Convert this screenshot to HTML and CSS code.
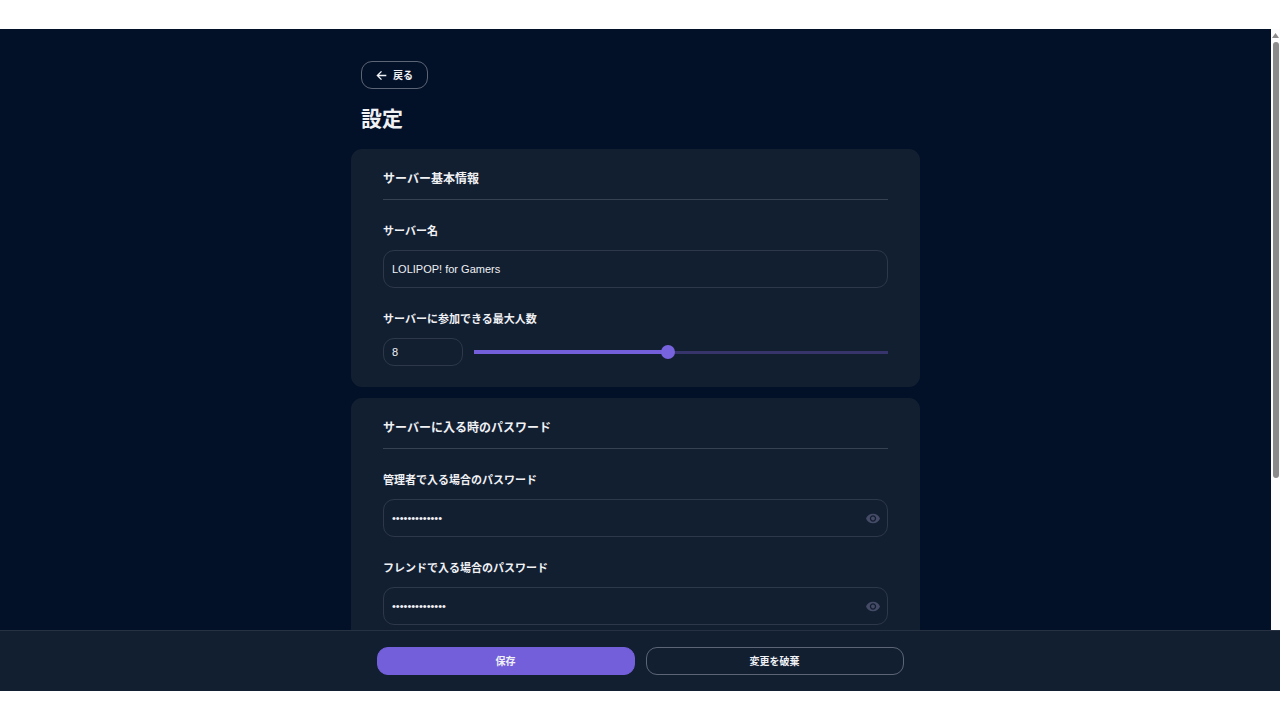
FILE: index.html
```html
<!DOCTYPE html>
<html lang="ja">
<head>
    <meta charset="UTF-8">
    <title>設定</title>
    <link rel="stylesheet" href="styles.css">
</head>
<body>

<div class="viewport">
    <main class="content">
        <div class="column">
            <header class="page-header">
                <a class="btn btn-back" href="#">
                    <svg class="icon-arrow" viewBox="0 0 16 16" aria-hidden="true"><path d="M15 8H2M8 2L2 8l6 6"/></svg>
                    戻る
                </a>
                <h1>設定</h1>
            </header>

            <form id="settings" class="cards">
                <section class="card">
                    <h2>サーバー基本情報</h2>
                    <div class="field">
                        <label for="server-name">サーバー名</label>
                        <input class="box" type="text" id="server-name" value="LOLIPOP! for Gamers">
                    </div>
                    <div class="field">
                        <label for="max-players">サーバーに参加できる最大人数</label>
                        <div class="players">
                            <input class="box box-small" type="text" inputmode="numeric" id="max-players" value="8">
                            <input class="slider" type="range" id="players-range" min="1" max="16" value="8" aria-label="サーバーに参加できる最大人数">
                        </div>
                    </div>
                </section>

                <section class="card">
                    <h2>サーバーに入る時のパスワード</h2>
                    <div class="field">
                        <label for="admin-pass">管理者で入る場合のパスワード</label>
                        <div class="box password">
                            <input type="password" id="admin-pass" value="administrator">
                            <button type="button" class="eye" aria-label="パスワードを表示">
                                <svg viewBox="1 4 22 16" aria-hidden="true"><path d="M12 4.5C7 4.5 2.73 7.61 1 12c1.73 4.39 6 7.5 11 7.5s9.27-3.11 11-7.5c-1.73-4.39-6-7.5-11-7.5zM12 17c-2.76 0-5-2.24-5-5s2.24-5 5-5 5 2.24 5 5-2.24 5-5 5zm0-8c-1.66 0-3 1.34-3 3s1.34 3 3 3 3-1.34 3-3-1.34-3-3-3z"/></svg>
                            </button>
                        </div>
                    </div>
                    <div class="field">
                        <label for="friend-pass">フレンドで入る場合のパスワード</label>
                        <div class="box password">
                            <input type="password" id="friend-pass" value="friendpassword">
                            <button type="button" class="eye" aria-label="パスワードを表示">
                                <svg viewBox="1 4 22 16" aria-hidden="true"><path d="M12 4.5C7 4.5 2.73 7.61 1 12c1.73 4.39 6 7.5 11 7.5s9.27-3.11 11-7.5c-1.73-4.39-6-7.5-11-7.5zM12 17c-2.76 0-5-2.24-5-5s2.24-5 5-5 5 2.24 5 5-2.24 5-5 5zm0-8c-1.66 0-3 1.34-3 3s1.34 3 3 3 3-1.34 3-3-1.34-3-3-3z"/></svg>
                            </button>
                        </div>
                    </div>
                </section>
            </form>
        </div>
    </main>
    <div class="scrollbar" aria-hidden="true">
        <svg class="scroll-up" viewBox="0 0 7 5"><path d="M3.5 0L7 5H0z"/></svg>
        <div class="scroll-thumb"></div>
    </div>
</div>

<footer class="actions">
    <button type="submit" form="settings" class="btn btn-primary">保存</button>
    <button type="reset" form="settings" class="btn">変更を破棄</button>
</footer>

</body>
</html>
```
FILE: styles.css
```css
* {
    box-sizing: border-box;
}
body {
    margin: 0;
    padding: 29px 0;
    height: 100vh;
    display: flex;
    flex-direction: column;
    background: #fff;
    color: #f0f1f5;
    font-family: "Noto Sans CJK JP", sans-serif;
    font-size: 11px;
    line-height: 16px;
}
.viewport {
    flex: 1;
    min-height: 0;
    display: flex;
    background: #021028;
}
.content {
    flex: 1;
    overflow: hidden;
    padding-top: 32px;
}
.column {
    max-width: 569px;
    margin: 0 auto;
}
.page-header {
    display: flex;
    flex-direction: column;
    align-items: flex-start;
    gap: 12px;
    padding: 0 10px;
    margin-bottom: 16px;
}
h1 {
    margin: 0;
    font-size: 21px;
    line-height: 32px;
}
.btn {
    display: flex;
    align-items: center;
    justify-content: center;
    height: 28px;
    border: 1px solid #5c6575;
    border-radius: 11px;
    background: transparent;
    color: #f0f1f5;
    font: inherit;
    font-size: 10px;
    font-weight: bold;
    text-decoration: none;
    cursor: pointer;
}
.btn-back {
    gap: 6px;
    padding: 0 14px;
}
.btn-primary {
    border-color: #745fdb;
    background: #745fdb;
}
.icon-arrow {
    width: 11px;
    height: 11px;
    fill: none;
    stroke: currentColor;
    stroke-width: 2;
}
.cards {
    display: flex;
    flex-direction: column;
    gap: 11px;
}
.card {
    display: flex;
    flex-direction: column;
    gap: 22px;
    padding: 21px 32px;
    border-radius: 11px;
    background: #121f31;
}
h2 {
    margin: 0;
    padding-bottom: 13px;
    border-bottom: 1px solid #364152;
    font-size: 12px;
    line-height: 16px;
}
.field {
    display: flex;
    flex-direction: column;
    gap: 12px;
}
label {
    font-weight: bold;
}
input {
    font-family: "Liberation Sans", sans-serif;
    font-size: 11px;
    color: #f0f1f5;
}
.box {
    width: 100%;
    height: 38px;
    padding: 0 8px;
    border: 1px solid #2d384a;
    border-radius: 11px;
    background: transparent;
}
.box-small {
    width: 80px;
    height: 28px;
}
.players {
    display: flex;
    gap: 11px;
}
.slider {
    flex: 1;
    min-width: 0;
    margin: 0;
    appearance: none;
    background:
        linear-gradient(#745fdb, #745fdb) left center / 47% 4px no-repeat,
        linear-gradient(#37346b, #37346b) center / 100% 3px no-repeat;
}
.slider::-webkit-slider-thumb {
    appearance: none;
    width: 14px;
    height: 14px;
    border-radius: 50%;
    background: #7863de;
}
.password {
    display: flex;
    align-items: center;
    padding-right: 7px;
}
.password input {
    flex: 1;
    min-width: 0;
    padding: 0;
    border: 0;
    background: transparent;
}
.eye {
    display: flex;
    padding: 0;
    border: 0;
    background: transparent;
    cursor: pointer;
}
.eye svg {
    width: 14px;
    height: 11px;
    fill: #454b66;
}
.scrollbar {
    display: flex;
    flex-direction: column;
    align-items: center;
    gap: 4px;
    width: 9px;
    padding-top: 4px;
    background: #fcfcfc;
}
.scroll-up {
    width: 7px;
    height: 5px;
    fill: #8b8b8b;
}
.scroll-thumb {
    width: 6px;
    height: 73%;
    border-radius: 3px;
    background: #8b8b8b;
}
.actions {
    display: grid;
    grid-template-columns: repeat(2, minmax(0, 258px));
    justify-content: center;
    gap: 11px;
    padding: 16px;
    border-top: 1px solid #263142;
    background: #121f31;
}
```
